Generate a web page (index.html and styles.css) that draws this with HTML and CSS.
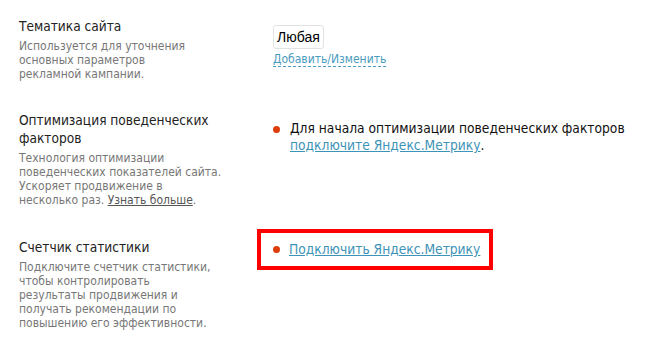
FILE: index.html
```html
<!DOCTYPE html>
<html lang="ru">
<head>
<meta charset="utf-8">
<link rel="stylesheet" href="styles.css">
</head>
<body>
<div class="settings">
  <div class="row row-theme">
    <div class="label">
      <div class="title">Тематика сайта</div>
      <div class="desc">Используется для уточнения<br>основных параметров<br>рекламной кампании.</div>
    </div>
    <div class="value">
      <div class="chip">Любая</div>
      <a class="dashed" href="#">Добавить/Изменить</a>
    </div>
  </div>
  <div class="row row-opt">
    <div class="label">
      <div class="title">Оптимизация поведенческих<br>факторов</div>
      <div class="desc">Технология оптимизации<br>поведенческих показателей сайта.<br>Ускоряет продвижение в<br>несколько раз. <a class="more" href="#">Узнать больше</a>.</div>
    </div>
    <div class="value">
      <div class="status">
        <span class="dot"></span>
        <span class="status-text">Для начала оптимизации поведенческих факторов<br><a class="link" href="#">подключите Яндекс.Метрику</a>.</span>
      </div>
    </div>
  </div>
  <div class="row row-stat">
    <div class="label">
      <div class="title">Счетчик статистики</div>
      <div class="desc">Подключите счетчик статистики,<br>чтобы контролировать<br>результаты продвижения и<br>получать рекомендации по<br>повышению его эффективности.</div>
    </div>
    <div class="value">
      <div class="highlight">
        <span class="dot"></span>
        <a class="link" href="#">Подключить Яндекс.Метрику</a>
      </div>
    </div>
  </div>
</div>
</body>
</html>
```

FILE: styles.css
```css
html, body {
  margin: 0;
  padding: 0;
  background: #fff;
}
body {
  font-family: "DejaVu Sans Condensed", "DejaVu Sans", sans-serif;
  color: #222;
}
.settings {
  padding: 17px 0 0 19px;
}
.row {
  display: grid;
  grid-template-columns: 254px 1fr;
}
.row-theme { height: 94px; }
.row-opt { height: 127px; }
.title {
  font-size: 13.6px;
  line-height: 18px;
  color: #222;
}
.desc {
  margin-top: 4px;
  font-size: 12px;
  line-height: 14px;
  color: #777;
}
.more {
  color: #555;
  text-decoration: underline;
}
.row-theme .value { padding-top: 8px; }
.chip {
  display: inline-block;
  box-sizing: border-box;
  height: 24px;
  padding: 0 3px;
  border: 1px solid #e2e2e2;
  border-radius: 3px;
  font-family: "Liberation Sans", Arial, sans-serif;
  font-size: 14px;
  line-height: 22px;
  color: #000;
}
.dashed {
  display: table;
  margin-top: 3px;
  font-size: 12px;
  line-height: 14px;
  color: #4a9cc0;
  text-decoration: none;
  border-bottom: 1px dashed #4a9cc0;
}
.status {
  display: flex;
  align-items: flex-start;
  padding-top: 9px;
}
.dot {
  flex: none;
  width: 7px;
  height: 7px;
  border-radius: 50%;
  background: #dd3c0b;
  margin: 6px 10px 0 0;
}
.status-text {
  font-size: 13.7px;
  line-height: 17px;
  color: #111;
}
.link {
  color: #3e93b8;
  text-decoration: underline;
}
.highlight {
  display: inline-flex;
  align-items: center;
  margin-left: -16px;
  margin-top: -9px;
  padding: 8px 9px 8px 12px;
  border: 4px solid #ff0000;
  font-size: 13.7px;
  line-height: 17px;
}
.highlight .dot {
  margin: 0 9px 0 0;
}
```
